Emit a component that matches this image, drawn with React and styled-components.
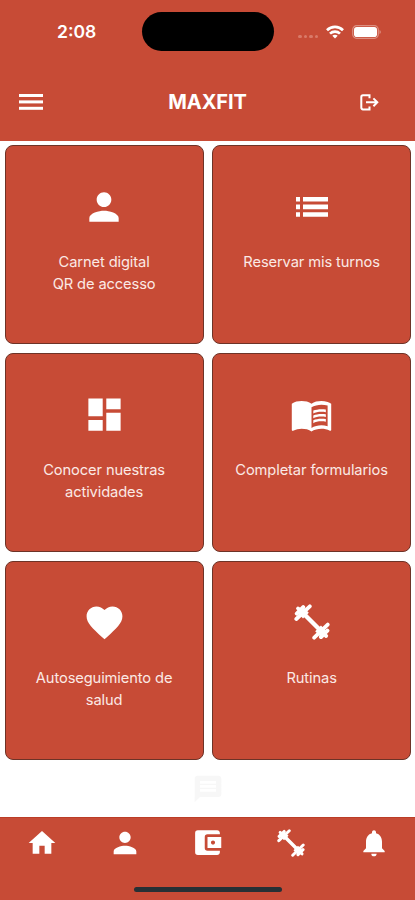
import React from "react";
import styled, { createGlobalStyle } from "styled-components";
import {
    MdPerson,
    MdDashboard,
    MdMenuBook,
    MdFavorite,
    MdMessage,
    MdHome,
    MdAccountBalanceWallet,
    MdNotifications,
} from "react-icons/md";

const GlobalStyle = createGlobalStyle`
    * {
        box-sizing: border-box;
    }
    body {
        margin: 0;
        background: #fff;
        font-family: Inter, "Liberation Sans", sans-serif;
    }
`

const Pantalla = styled.div`
    display: flex;
    flex-direction: column;
    width: 415px;
    height: 900px;
    overflow: hidden;
    background: #fff;
    color: #fff;
`

const Cabecera = styled.header`
    background: #c74b36;
    height: 141px;
`

const BarraEstado = styled.div`
    display: grid;
    grid-template-columns: 142px 132px 1fr;
    align-items: center;
    height: 63px;
`

const Hora = styled.div`
    font-size: 17.5px;
    font-weight: 600;
    padding-left: 57px;
`

const Isla = styled.div`
    background: #000;
    border-radius: 20px;
    height: 39px;
`

const Indicadores = styled.div`
    display: flex;
    align-items: center;
    padding-left: 24px;
`

const Senal = styled.div`
    display: flex;
    gap: 2px;
    margin-top: 10px;
    margin-right: 8px;
`

const Punto = styled.span`
    background: #d97a69;
    border-radius: 50%;
    height: 3.5px;
    width: 3.5px;
`

const Wifi = styled.svg`
    height: 14px;
    width: 18px;
    margin-right: 8px;
`

const Bateria = styled.svg`
    height: 14px;
    width: 30px;
`

const BarraTitulo = styled.div`
    display: grid;
    grid-template-columns: 90px 1fr 90px;
    align-items: center;
    height: 78px;
`

const Titulo = styled.h1`
    font-size: 20px;
    font-weight: 700;
    letter-spacing: -0.1px;
    margin: 0;
    text-align: center;
`

const BotonBarra = styled.button`
    display: flex;
    justify-content: ${(props) => (props.$derecha ? "flex-end" : "flex-start")};
    background: none;
    border: 0;
    color: #fff;
    padding: ${(props) => (props.$derecha ? "0 36px 0 0" : "0 0 0 19px")};
`

const Grilla = styled.main`
    display: grid;
    grid-template-columns: 199px 199px;
    grid-auto-rows: 199px;
    column-gap: 8.5px;
    row-gap: 8.7px;
    padding: 4.4px 0 0 4.6px;
    height: 623px;
`

const Tarjeta = styled.div`
    display: flex;
    flex-direction: column;
    align-items: center;
    background: #c74b36;
    border: 1px solid #6d3327;
    border-radius: 8px;
    padding-top: 37.5px;
`

const IconoTarjeta = styled.div`
    display: flex;
    align-items: center;
    justify-content: center;
    height: 46px;
`

const Texto = styled.div`
    color: #fbe9e5;
    font-size: 14.7px;
    letter-spacing: -0.12px;
    line-height: 22px;
    margin-top: 21.5px;
    text-align: center;
    white-space: pre-line;
`

const Chat = styled.div`
    display: flex;
    justify-content: center;
    color: #f7f7f7;
    padding-top: 10px;
    height: 54px;
`

const Pie = styled.footer`
    background: #c74b36;
    border-top: 1px solid #bb3d27;
    height: 83px;
`

const Navegacion = styled.nav`
    display: grid;
    grid-template-columns: repeat(5, 1fr);
    height: 69px;
    padding-top: 7.5px;
`

const Pestana = styled.div`
    display: flex;
    justify-content: center;
    align-items: center;
    height: 34px;
`

const Indicador = styled.div`
    background: #263035;
    border-radius: 3px;
    height: 5px;
    width: 148px;
    margin: 0 auto;
`

function Menu() {
    return (
        <svg width="24" height="16" viewBox="0 0 24 16" fill="#fff">
            <rect width="24" height="3" />
            <rect y="6.4" width="24" height="3" />
            <rect y="12.8" width="24" height="3" />
        </svg>
    )
}

function Salir() {
    return (
        <svg width="19" height="17" viewBox="0 0 19 17" fill="none" stroke="#fff" strokeWidth="2">
            <path d="M9.5 4.2V1.2H3Q1.3 1.2 1.3 3V13.6Q1.3 15.4 3 15.4H9.5V12.4" />
            <path d="M6 8.3H17M13.4 4.4L17.3 8.3L13.4 12.2" />
        </svg>
    )
}

function Lista() {
    return (
        <svg width="32" height="20" viewBox="0 0 32 20" fill="#fff">
            <path d="M0 0H4V4.6H0ZM0 7.6H4V12.2H0ZM0 15.2H4V19.8H0Z" />
            <path d="M7 0H32V4.6H7ZM7 7.6H32V12.2H7ZM7 15.2H32V19.8H7Z" />
        </svg>
    )
}

function Pesa({ size }) {
    return (
        <svg width={size} height={size} viewBox="0 0 36 36" fill="none" stroke="#fff" strokeLinecap="round">
            <path d="M8 8L28 28" strokeWidth="4.4" />
            <path d="M6.2 11.6L12 5.8M24 30.2L29.8 24.4" strokeWidth="8" strokeLinecap="butt" />
            <path d="M2.3 15L15.8 2.3M20.2 33.7L33.7 20.6" strokeWidth="3.8" />
            <path d="M2.8 9.6L9.2 3.2M27 33L33.4 26.6" strokeWidth="4" />
            <path d="M4 4.4L8 8M32.2 32L28 28" strokeWidth="3.8" />
        </svg>
    )
}

const opciones = [
    { icono: <MdPerson size={44} />, texto: "Carnet digital\nQR de accesso" },
    { icono: <Lista />, texto: "Reservar mis turnos" },
    { icono: <MdDashboard size={43} />, texto: "Conocer nuestras\nactividades" },
    { icono: <MdMenuBook size={43} />, texto: "Completar formularios" },
    { icono: <MdFavorite size={43} />, texto: "Autoseguimiento de\nsalud" },
    { icono: <Pesa size={36} />, texto: "Rutinas" },
]

export default function App() {
    return <>
        <GlobalStyle />
        <Pantalla>
            <Cabecera>
                <BarraEstado>
                    <Hora>2:08</Hora>
                    <Isla />
                    <Indicadores>
                        <Senal>
                            <Punto /><Punto /><Punto /><Punto />
                        </Senal>
                        <Wifi viewBox="0 0 18 14" fill="none" stroke="#fff" strokeWidth="2.7">
                            <path d="M1 5.2C5.5 0.8 12.5 0.8 17 5.2" />
                            <path d="M4 8.6C6.8 5.9 11.2 5.9 14 8.6" />
                            <path d="M9 13.4L6.3 10.7C7.8 9.4 10.2 9.4 11.7 10.7Z" fill="#fff" stroke="none" />
                        </Wifi>
                        <Bateria viewBox="0 0 30 14">
                            <rect x="0.7" y="0.7" width="25.6" height="12.6" rx="4" fill="none" stroke="#dd8f81" strokeWidth="1.2" />
                            <rect x="2" y="2" width="23" height="10" rx="2.8" fill="#fff" />
                            <path d="M27.5 5V9C29.3 8.2 29.3 5.8 27.5 5Z" fill="#dd8f81" />
                        </Bateria>
                    </Indicadores>
                </BarraEstado>
                <BarraTitulo>
                    <BotonBarra><Menu /></BotonBarra>
                    <Titulo>MAXFIT</Titulo>
                    <BotonBarra $derecha><Salir /></BotonBarra>
                </BarraTitulo>
            </Cabecera>
            <Grilla>
                {opciones.map((opcion) => (
                    <Tarjeta key={opcion.texto}>
                        <IconoTarjeta>{opcion.icono}</IconoTarjeta>
                        <Texto>{opcion.texto}</Texto>
                    </Tarjeta>
                ))}
            </Grilla>
            <Chat><MdMessage size={32} /></Chat>
            <Pie>
                <Navegacion>
                    <Pestana><MdHome size={32} /></Pestana>
                    <Pestana><MdPerson size={34} /></Pestana>
                    <Pestana><MdAccountBalanceWallet size={33} /></Pestana>
                    <Pestana><Pesa size={28} /></Pestana>
                    <Pestana><MdNotifications size={32} /></Pestana>
                </Navegacion>
                <Indicador />
            </Pie>
        </Pantalla>
    </>
}
